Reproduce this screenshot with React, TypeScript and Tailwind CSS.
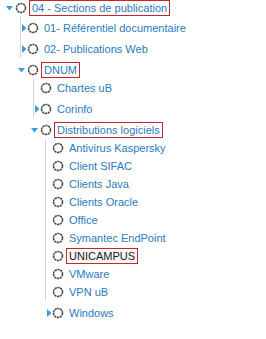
import React from "react";

type Row = {
  level: 0 | 1 | 2 | 3;
  toggle?: "down" | "right";
  label: string;
  boxed?: boolean;
  dark?: boolean;
  line?: boolean;
  root?: boolean;
};

const rows: Row[] = [
  { level: 0, toggle: "down", label: "04 - Sections de publication", boxed: true, root: true },
  { level: 1, toggle: "right", label: "01- Référentiel documentaire", line: true },
  { level: 1, toggle: "right", label: "02- Publications Web", line: true },
  { level: 1, toggle: "down", label: "DNUM", boxed: true },
  { level: 2, label: "Chartes uB", line: true },
  { level: 2, toggle: "right", label: "Corinfo", line: true },
  { level: 2, toggle: "down", label: "Distributions logiciels", boxed: true },
  { level: 3, label: "Antivirus Kaspersky", line: true },
  { level: 3, label: "Client SIFAC", line: true },
  { level: 3, label: "Clients Java", line: true },
  { level: 3, label: "Clients Oracle", line: true },
  { level: 3, label: "Office", line: true },
  { level: 3, label: "Symantec EndPoint", line: true },
  { level: 3, label: "UNICAMPUS", boxed: true, dark: true, line: true },
  { level: 3, label: "VMware", line: true },
  { level: 3, label: "VPN uB", line: true },
  { level: 3, toggle: "right", label: "Windows" },
];

const indentClass = ["w-[2px]", "w-[14px]", "w-[27px]", "w-[39px]"];

function Circle() {
  return (
    <svg width="12" height="12" viewBox="0 0 12 12" className="shrink-0 block -ml-[1px]">
      <circle
        cx="6"
        cy="6"
        r="4.5"
        fill="none"
        stroke="#4d4d4d"
        strokeWidth="1.6"
        strokeDasharray="2.3 0.55"
      />
    </svg>
  );
}

function Toggle({ dir }: { dir?: "down" | "right" }) {
  if (dir === "down") {
    return (
      <svg width="7" height="5" viewBox="0 0 7 5" className="block ml-[4px]">
        <polygon points="0,0 7,0 3.5,4.5" fill="#3a9be0" />
      </svg>
    );
  }
  if (dir === "right") {
    return (
      <svg width="5" height="8" viewBox="0 0 5 8" className="block ml-[1px]">
        <polygon points="0,0 4.5,4 0,8" fill="#3a9be0" />
      </svg>
    );
  }
  return null;
}

function TreeRow({ row }: { row: Row }) {
  const isToggleRow = !!row.toggle && !row.root;
  const height = row.root ? "h-[16px]" : isToggleRow ? "h-[21px]" : "h-[18px]";
  const pad = isToggleRow ? "pt-[3px]" : "";
  return (
    <div className={`flex ${height}`}>
      <div className={`${indentClass[row.level]} shrink-0`} />
      <div className="flex w-[14px] shrink-0">
        {row.line ? (
          <div className="ml-[6px] w-px bg-[#d6d6d6] self-stretch" />
        ) : (
          <div className="ml-[6px] w-px" />
        )}
        <div className={`flex items-center ${pad}`}>
          {row.toggle === "down" ? (
            <div className="-ml-[7px]">
              <Toggle dir="down" />
            </div>
          ) : (
            <Toggle dir={row.toggle} />
          )}
        </div>
      </div>
      <div className={`flex items-center ${pad}`}>
        <Circle />
        <span
          className={`ml-[2px] border px-[2px] leading-[14px] text-[11px] whitespace-nowrap ${
            row.boxed ? "border-[#c0282d]" : "border-transparent"
          } ${row.dark ? "text-[#1a1a1a] bg-[#f7f7f7]" : "text-[#2b7bbb]"}`}
        >
          {row.label}
        </span>
      </div>
    </div>
  );
}

export default function App() {
  return (
    <div
      className="w-[266px] h-[339px] bg-white overflow-hidden"
      style={{ fontFamily: '"Liberation Sans", Arial, sans-serif' }}
    >
      <div className="flex flex-col">
        {rows.map((r, i) => (
          <TreeRow key={i} row={r} />
        ))}
      </div>
    </div>
  );
}
